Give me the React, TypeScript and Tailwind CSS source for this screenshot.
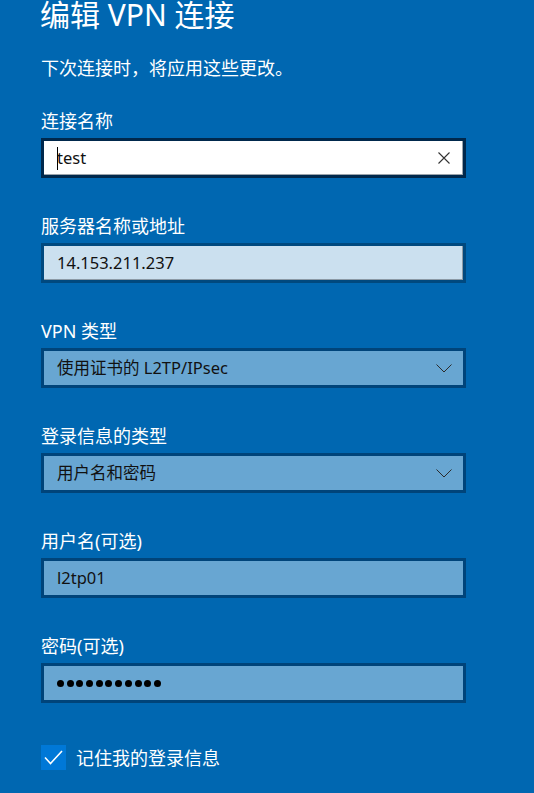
import React from "react";

const font = { fontFamily: '"Segoe UI", "Noto Sans", "Noto Sans CJK SC", sans-serif' };

function Chevron() {
  return (
    <svg width="16" height="9" viewBox="0 0 16 9" className="shrink-0">
      <path d="M0.5 0.5 L8 8 L15.5 0.5" fill="none" stroke="#2b2b2b" strokeWidth="1" />
    </svg>
  );
}

function ClearIcon() {
  return (
    <svg width="12" height="12" viewBox="0 0 12 12" className="shrink-0">
      <path d="M0.5 0.5 L11.5 11.5 M11.5 0.5 L0.5 11.5" fill="none" stroke="#333" strokeWidth="1.1" />
    </svg>
  );
}

function Group({ label, children }: { label: string; children: React.ReactNode }) {
  return (
    <div className="flex flex-col">
      <div className="text-[18px] leading-[24px] text-white h-[24px]">{label}</div>
      <div className="mt-[5px]">{children}</div>
    </div>
  );
}

function Box({ kind, children }: { kind: "active" | "light" | "mid"; children: React.ReactNode }) {
  const cls =
    kind === "active"
      ? "bg-white border-[#00284c] shadow-[inset_-1px_-1px_0_#9aa3ab]"
      : kind === "light"
      ? "bg-[#cbe0ef] border-[#00497f] shadow-[inset_-1px_-1px_0_#8c9aa6]"
      : "bg-[#68a6d2] border-[#00447a]";
  return (
    <div
      className={
        "w-[425px] h-[40px] border-[3px] flex items-center pl-[13px] pr-[11px] text-[16.5px] text-[#111] " + cls
      }
    >
      {children}
    </div>
  );
}

export default function App() {
  return (
    <div className="w-[534px] h-[793px] bg-[#0067b1] overflow-hidden pl-[41px]" style={font}>
      <div className="text-[30px] leading-[30px] text-white -ml-[1px]">编辑 VPN 连接</div>
      <div className="mt-[26px] text-[18px] leading-[24px] text-white">下次连接时，将应用这些更改。</div>

      <div className="mt-[29px] flex flex-col gap-[36px]">
        <Group label="连接名称">
          <Box kind="active">
            <span className="w-px h-[23px] bg-black mr-[-1px]" />
            <span className="flex-1">test</span>
            <span className="mr-[2px]">
              <ClearIcon />
            </span>
          </Box>
        </Group>

        <Group label="服务器名称或地址">
          <Box kind="light">
            <span>14.153.211.237</span>
          </Box>
        </Group>

        <Group label="VPN 类型">
          <Box kind="mid">
            <span className="flex-1">使用证书的 L2TP/IPsec</span>
            <Chevron />
          </Box>
        </Group>

        <Group label="登录信息的类型">
          <Box kind="mid">
            <span className="flex-1">用户名和密码</span>
            <Chevron />
          </Box>
        </Group>

        <Group label="用户名(可选)">
          <Box kind="mid">
            <span>l2tp01</span>
          </Box>
        </Group>

        <Group label="密码(可选)">
          <Box kind="mid">
            <div className="flex gap-[2.7px]">
              {Array.from({ length: 11 }).map((_, i) => (
                <span key={i} className="w-[7px] h-[7px] rounded-full bg-black" />
              ))}
            </div>
          </Box>
        </Group>
      </div>

      <div className="mt-[42px] flex items-center">
        <div className="w-[25px] h-[25px] bg-[#0078d7] flex items-center justify-center">
          <svg width="19" height="15" viewBox="0 0 19 15">
            <path d="M1 7.5 L6.5 13.5 L18 1" fill="none" stroke="#fff" strokeWidth="1.6" />
          </svg>
        </div>
        <span className="ml-[10px] text-[18px] leading-[24px] text-white">记住我的登录信息</span>
      </div>
    </div>
  );
}
